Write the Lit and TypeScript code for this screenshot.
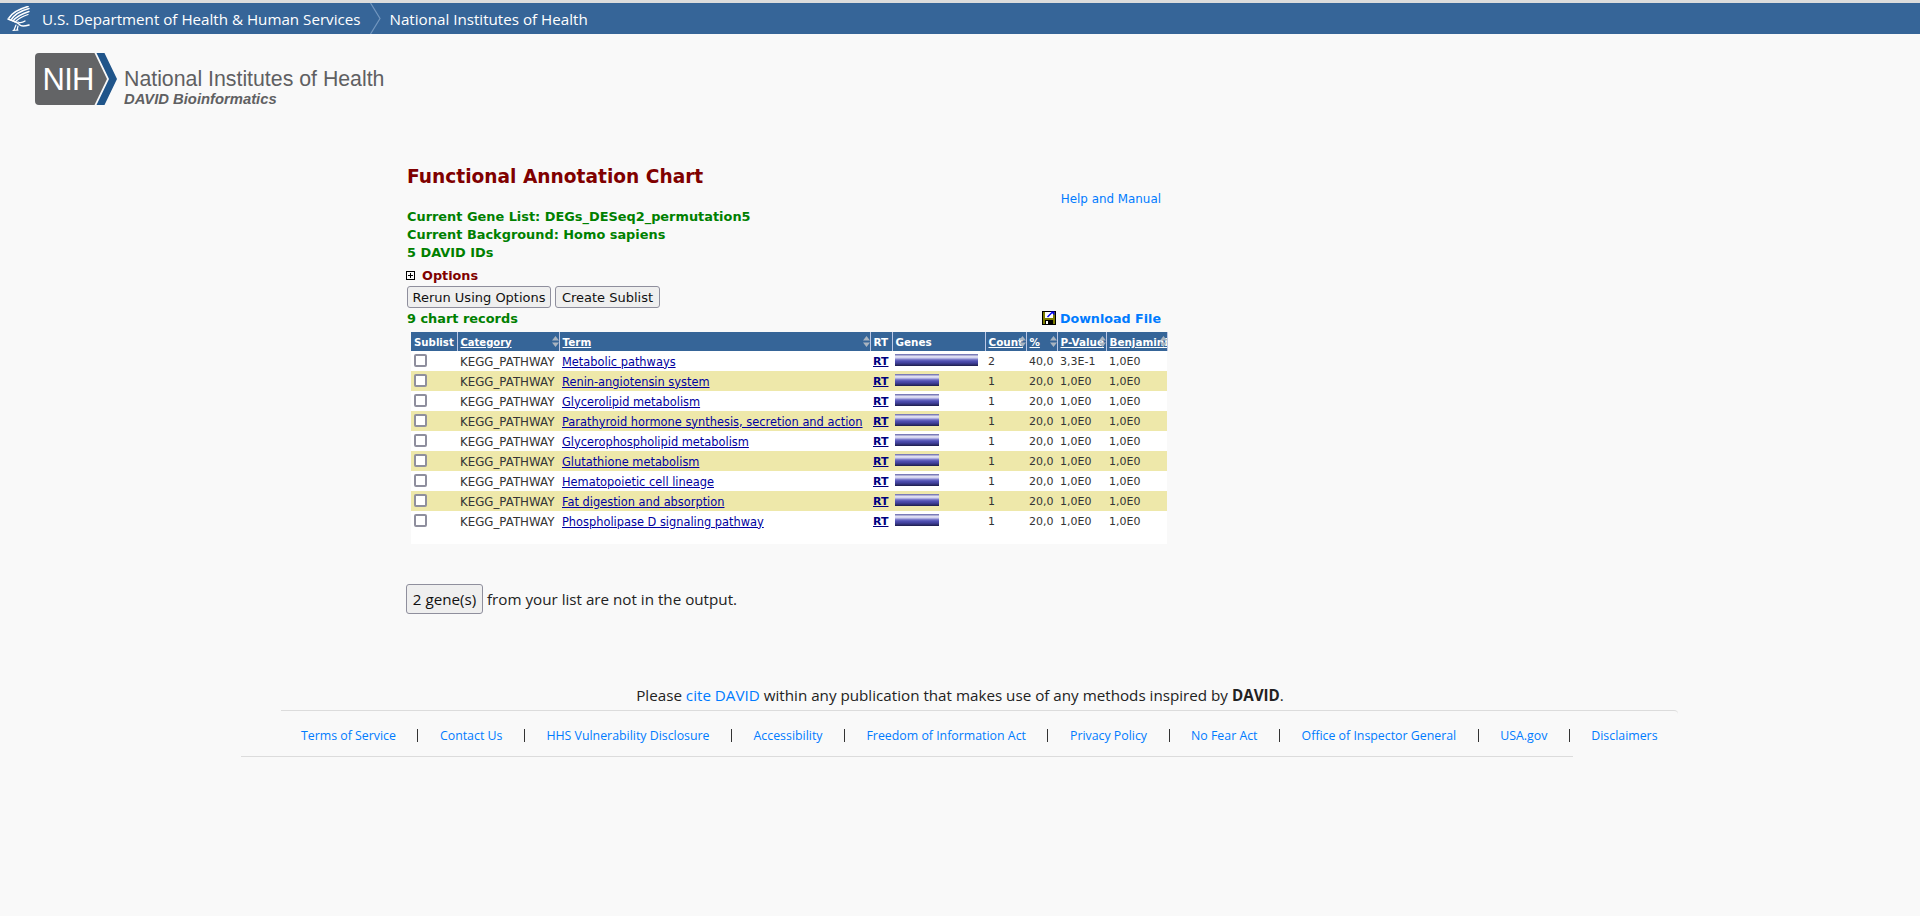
import { LitElement, html, css, svg } from "lit";
import { customElement } from "lit/decorators.js";

const TERMS = [
  ["Metabolic pathways", 2, "40,0", "3,3E-1"],
  ["Renin-angiotensin system", 1, "20,0", "1,0E0"],
  ["Glycerolipid metabolism", 1, "20,0", "1,0E0"],
  ["Parathyroid hormone synthesis, secretion and action", 1, "20,0", "1,0E0"],
  ["Glycerophospholipid metabolism", 1, "20,0", "1,0E0"],
  ["Glutathione metabolism", 1, "20,0", "1,0E0"],
  ["Hematopoietic cell lineage", 1, "20,0", "1,0E0"],
  ["Fat digestion and absorption", 1, "20,0", "1,0E0"],
  ["Phospholipase D signaling pathway", 1, "20,0", "1,0E0"],
] as const;

const COLS = [
  { w: 46, label: "Sublist" },
  { w: 102, label: "Category", link: true, sort: true },
  { w: 311, label: "Term", link: true, sort: true },
  { w: 22, label: "RT" },
  { w: 93, label: "Genes" },
  { w: 41, label: "Count", link: true, sort: true },
  { w: 31, label: "%", link: true, sort: true },
  { w: 49, label: "P-Value", link: true, sort: true },
  { w: 61, label: "Benjamini", link: true, sort: true },
];

const FOOTER = [
  "Terms of Service",
  "Contact Us",
  "HHS Vulnerability Disclosure",
  "Accessibility",
  "Freedom of Information Act",
  "Privacy Policy",
  "No Fear Act",
  "Office of Inspector General",
  "USA.gov",
  "Disclaimers",
];

const eagle = svg`
  <svg class="eagle" width="24" height="26" viewBox="0 0 24 26" fill="none" stroke="#fff" stroke-linecap="round">
    <path stroke-width="1.6" d="M2 12C5 7 12 3 21 0.5" />
    <path stroke-width="1.5" d="M4 14C7 9 13 5 22 2.5" />
    <path stroke-width="1.4" d="M6 15C9 11 14 8 22 5.5" />
    <path stroke-width="1.3" d="M8 16C11 13 15 10.5 21 8.5" />
    <path stroke-width="1.6" d="M1 13C5 15 9 15 12 18C13 20 15 21 22 19" />
    <path stroke-width="1.3" d="M11 16C13 17 15 17 18 15" />
    <path stroke-width="1.2" d="M9 19L7 24M11 20L10 24.5M6 24.5L11 24" />
  </svg>`;

const nihMark = svg`
  <svg width="82" height="52" viewBox="0 0 82 52">
    <path fill="#636466" d="M4 0H59.5L72 26L59.5 52H4Q0 52 0 48V4Q0 0 4 0Z" />
    <path fill="#20558a" d="M61.5 0H69.5L82 26L69.5 52H61.5L74 26Z" />
    <text x="7.5" y="37" fill="#fff" font-family="Liberation Sans" font-size="31" letter-spacing="-0.7">NIH</text>
  </svg>`;

const floppy = svg`
  <svg class="floppy" width="14" height="14" viewBox="0 0 14 14">
    <rect width="14" height="14" fill="#000" />
    <rect x="1" y="1" width="12" height="12" fill="#7d7d00" />
    <rect x="3" y="1" width="8" height="6" fill="#fff" />
    <rect x="3" y="9" width="8" height="5" fill="#000" />
    <rect x="4" y="10" width="2" height="3" fill="#fff" />
    <path d="M5.5 6L10 1.5" stroke="#0000f0" stroke-width="1.4" />
    <path d="M8.5 0.5H12.5V4.5Z" fill="#0000f0" />
  </svg>`;

const sortArrows = svg`
  <svg class="sort" width="7" height="11" viewBox="0 0 7 11">
    <path fill="#a9b4c0" d="M3.5 0L7 4.5H0ZM0 6.5H7L3.5 11Z" />
  </svg>`;

@customElement("app-root")
export class AppRoot extends LitElement {
  static styles = css`
    :host {
      display: block;
      min-height: 916px;
      background: #f9f9f9;
      border-top: 3px solid #dcdcdc;
      box-sizing: border-box;
      font-family: "DejaVu Sans", sans-serif;
      color: #222;
    }
    a {
      color: #007bff;
      text-decoration: none;
    }
    .hhs {
      display: flex;
      align-items: center;
      height: 31px;
      padding-left: 7px;
      background: #366598;
      color: #fff;
      font-family: "Open Sans", sans-serif;
      font-size: 15.17px;
    }
    .eagle {
      margin-right: 11px;
    }
    .crumb-sep {
      margin: 0 9px 0 9px;
    }
    .brand {
      display: flex;
      align-items: flex-start;
      padding: 19px 0 0 35px;
      height: 73px;
    }
    .brand-text {
      margin: 15px 0 0 7px;
      font-family: "Liberation Sans", sans-serif;
      color: #5f6062;
    }
    .brand-name {
      font-size: 21.3px;
      line-height: 23px;
    }
    .brand-sub {
      font-size: 14.8px;
      line-height: 16px;
      font-weight: 700;
      font-style: italic;
    }
    .main {
      width: 754px;
      margin-left: 407px;
      padding-top: 39px;
    }
    h1 {
      margin: 0;
      font-size: 18.6px;
      line-height: 24px;
      font-weight: 700;
      color: #800000;
    }
    .help {
      text-align: right;
      font-size: 11.9px;
      line-height: 18px;
      margin-top: 1px;
    }
    .green {
      color: #008000;
      font-weight: 700;
      font-size: 12.9px;
      line-height: 18px;
    }
    .options {
      display: flex;
      align-items: center;
      margin: 4px 0 2px -1px;
      height: 18px;
      color: #800000;
      font-weight: 700;
      font-size: 12.8px;
    }
    .plus {
      margin-right: 7px;
    }
    .actions {
      display: flex;
      gap: 4px;
    }
    button {
      font-family: inherit;
      font-size: 13px;
      color: #111;
      background: #efefef;
      border: 1px solid #8f8f9d;
      border-radius: 3px;
      padding: 0;
      height: 22px;
    }
    .rerun {
      width: 144px;
    }
    .sublist {
      width: 105px;
    }
    .records {
      display: flex;
      justify-content: space-between;
      align-items: center;
      height: 18px;
      margin-top: 1px;
    }
    .records .green {
      margin-top: 2px;
    }
    .download {
      display: flex;
      align-items: center;
      font-weight: 700;
      font-size: 12.7px;
    }
    .floppy {
      margin-right: 4px;
    }
    .chart {
      width: 756px;
      margin: 5px 0 0 4px;
      padding-bottom: 13px;
      background: #fff;
    }
    table {
      table-layout: fixed;
      width: 756px;
      border-collapse: collapse;
      font-size: 11px;
    }
    th {
      position: relative;
      height: 19px;
      padding: 1px 0 0 3px;
      box-sizing: border-box;
      background: #366598;
      border-right: 1px solid #bcc8e6;
      color: #fff;
      font-size: 10.4px;
      font-weight: 700;
      text-align: left;
      white-space: nowrap;
      overflow: hidden;
    }
    th:first-child {
      padding-left: 3px;
      font-size: 10.2px;
    }
    th:nth-child(2) {
      font-size: 10px;
    }
    th u {
      text-decoration: underline;
    }
    .sort {
      position: absolute;
      right: 0;
      top: 4px;
    }
    td {
      height: 20px;
      padding: 1px 0 0 3px;
      box-sizing: border-box;
      color: #333;
      white-space: nowrap;
    }
    td:nth-child(2) {
      font-size: 11.8px;
    }
    td:nth-child(3) {
      font-size: 11.4px;
    }
    tr:nth-child(even) td {
      background: #eee8aa;
    }
    td a {
      color: #0000a0;
      text-decoration: underline;
    }
    td a.rt {
      color: #000080;
      font-weight: 700;
    }
    input {
      appearance: none;
      display: block;
      width: 13px;
      height: 13px;
      margin: -3px 0 0 0;
      box-sizing: border-box;
      border: 2px solid #8f8f9d;
      border-radius: 2px;
      background: #fff;
    }
    .bar {
      height: 12px;
      margin-top: -3px;
      background: linear-gradient(
        #7b7bb8 0,
        #7b7bb8 8%,
        #e4e4f4 17%,
        #d0d0ee 33%,
        #8888d0 42%,
        #5252b4 58%,
        #40409a 75%,
        #2c2c6c 90%,
        #1c1c48 100%
      );
    }
    .missing {
      display: flex;
      align-items: center;
      margin: 40px 0 0 -1px;
      font-family: "Open Sans", sans-serif;
      font-size: 15.2px;
      white-space: nowrap;
    }
    .missing button {
      width: 77px;
      height: 30px;
      margin-right: 4px;
      font-family: inherit;
      font-size: 15.2px;
    }
    .cite {
      margin-top: 70px;
      text-align: center;
      font-family: "Open Sans", sans-serif;
      font-size: 15.2px;
      line-height: 22px;
    }
    .cite b {
      font-weight: 700;
    }
    .foot {
      font-family: "Open Sans", sans-serif;
      font-size: 12.35px;
    }
    .foot-top {
      width: 1397px;
      margin: 4px 0 0 281px;
      box-sizing: border-box;
      border-top: 1px solid #dcdcdc;
      border-top-right-radius: 4px;
    }
    .foot-links {
      display: flex;
      align-items: center;
      height: 41px;
      padding: 4px 0 0 20px;
      white-space: nowrap;
    }
    .pipe {
      width: 1px;
      height: 13px;
      margin: 0 21.5px;
      background: #333;
    }
    .foot-bottom {
      width: 1332px;
      height: 1px;
      margin-left: 241px;
      background: #dcdcdc;
    }
  `;

  render() {
    return html`
      <div class="hhs">
        ${eagle}
        <span>U.S. Department of Health &amp; Human Services</span>
        <svg class="crumb-sep" width="11" height="31" viewBox="0 0 11 31" fill="none" stroke="#7397bf" stroke-width="1.2">
          <path d="M0.5 0L10 15.5L0.5 31" />
        </svg>
        <span>National Institutes of Health</span>
      </div>
      <div class="brand">
        ${nihMark}
        <div class="brand-text">
          <div class="brand-name">National Institutes of Health</div>
          <div class="brand-sub">DAVID Bioinformatics</div>
        </div>
      </div>
      <div class="main">
        <h1>Functional Annotation Chart</h1>
        <div class="help"><a href="#">Help and Manual</a></div>
        <div class="green">Current Gene List: DEGs_DESeq2_permutation5</div>
        <div class="green">Current Background: Homo sapiens</div>
        <div class="green">5 DAVID IDs</div>
        <div class="options">
          <svg class="plus" width="9" height="9" viewBox="0 0 9 9" fill="none" stroke="#000">
            <rect x="0.5" y="0.5" width="8" height="8" />
            <path d="M2 4.5H7M4.5 2V7" />
          </svg>
          Options
        </div>
        <div class="actions">
          <button class="rerun">Rerun Using Options</button>
          <button class="sublist">Create Sublist</button>
        </div>
        <div class="records">
          <span class="green">9 chart records</span>
          <a class="download" href="#">${floppy}Download File</a>
        </div>
        <div class="chart">
          <table>
            <colgroup>
              ${COLS.map((c) => html`<col style="width:${c.w}px" />`)}
            </colgroup>
            <thead>
              <tr>
                ${COLS.map(
                  (c) => html`<th>
                    ${c.link ? html`<u>${c.label}</u>` : c.label}${c.sort ? sortArrows : ""}
                  </th>`
                )}
              </tr>
            </thead>
            <tbody>
              ${TERMS.map(
                ([term, count, pct, p]) => html`<tr>
                  <td><input type="checkbox" /></td>
                  <td>KEGG_PATHWAY</td>
                  <td><a href="#">${term}</a></td>
                  <td><a class="rt" href="#">RT</a></td>
                  <td><div class="bar" style="width:${count * 41.5 + (count === 1 ? 2.5 : 0)}px"></div></td>
                  <td>${count}</td>
                  <td>${pct}</td>
                  <td>${p}</td>
                  <td>1,0E0</td>
                </tr>`
              )}
            </tbody>
          </table>
        </div>
        <div class="missing">
          <button>2 gene(s)</button>
          from your list are not in the output.
        </div>
      </div>
      <div class="cite">Please <a href="#">cite DAVID</a> within any publication that makes use of any methods inspired by <b>DAVID</b>.</div>
      <div class="foot">
        <div class="foot-top">
          <div class="foot-links">
            ${FOOTER.map(
              (label, i) => html`${i ? html`<span class="pipe"></span>` : ""}<a href="#">${label}</a>`
            )}
          </div>
        </div>
        <div class="foot-bottom"></div>
      </div>
    `;
  }
}
